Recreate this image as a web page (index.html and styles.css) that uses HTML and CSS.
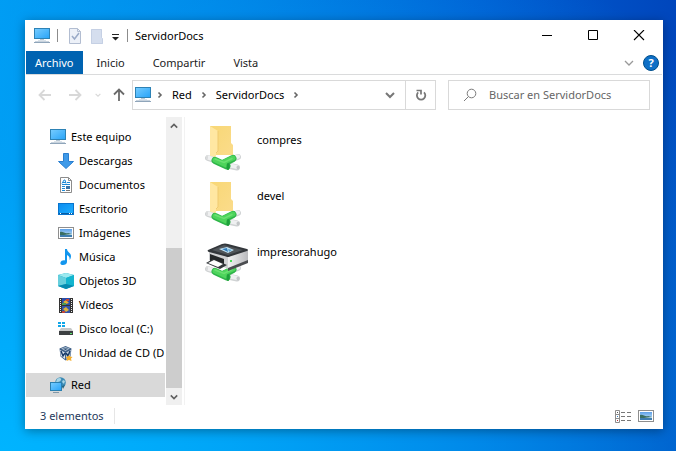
FILE: index.html
```html
<!DOCTYPE html>
<html lang="es">
<head>
<meta charset="utf-8">
<meta name="viewport" content="width=device-width, initial-scale=1">
<title>ServidorDocs</title>
<link rel="stylesheet" href="styles.css">
</head>
<body>
<svg class="defs" aria-hidden="true">
  <defs>
    <linearGradient id="screen" x1="0" y1="0" x2="1" y2="1"><stop offset="0" stop-color="#78cdff"/><stop offset="1" stop-color="#27a3f8"/></linearGradient>
    <linearGradient id="desk" x1="0" y1="0" x2="1" y2="1"><stop offset="0" stop-color="#0b8cf0"/><stop offset="1" stop-color="#1fb0ff"/></linearGradient>
    <linearGradient id="sky" x1="0" y1="0" x2="0" y2="1"><stop offset="0" stop-color="#5b9fe8"/><stop offset="1" stop-color="#d8f0fa"/></linearGradient>
    <linearGradient id="fold" x1="0" y1="0" x2="1" y2="1"><stop offset="0" stop-color="#f8d775"/><stop offset="1" stop-color="#fbdc8c"/></linearGradient>
    <linearGradient id="side" x1="0" y1="0" x2="1" y2="0"><stop offset="0" stop-color="#f2f2f3"/><stop offset="1" stop-color="#b9babd"/></linearGradient>
    <symbol id="pc" viewBox="0 0 16 16">
      <rect x=".5" y=".5" width="15" height="10" fill="url(#screen)" stroke="#2d82b5"/>
      <path d="M6 11h4v1H6z" fill="#b9c8d4"/><path d="M4 12h8v1H4z" fill="#dbe3ea"/><path d="M0 14h16v1H0z" fill="#8fa5ba"/><path d="M1 13h14v1H1z" fill="#c8d3de"/>
    </symbol>
    <symbol id="down" viewBox="0 0 16 16"><path d="M5.500.500h5v8h5L8 15.500.500 8.500h5z" fill="#3f9ae8" stroke="#2a7fd0"/></symbol>
    <symbol id="doc" viewBox="0 0 16 16">
      <path d="M2.500.500h8l3 3v12h-11z" fill="#fff" stroke="#8c8c8c"/><path d="M10.500.500v3h3" fill="none" stroke="#8c8c8c"/>
      <path d="M4 6.500L6 3h1l1 3.500M5 5.500h3M9 5.500h3M4 7.500h8M4 9.500h3M4 11.500h3M4 13.500h3" stroke="#1c8ad8" fill="none"/><path d="M8 9h4v3H8z" fill="#3974a8"/><path d="M8 13.500h4" stroke="#777"/>
    </symbol>
    <symbol id="desktop" viewBox="0 0 16 16"><rect x=".5" y="2.500" width="15" height="11" fill="url(#desk)" stroke="#0874cd"/><path d="M1 12h14v1H1z" fill="#075b9f"/><path d="M2 12h1v1H2zM11 12h1v1h-1zM13 12h1v1h-1z" fill="#fff"/></symbol>
    <symbol id="image" viewBox="0 0 16 16"><rect x=".5" y="2.500" width="15" height="11" fill="#fff" stroke="#8e8e8e"/><rect x="2" y="4" width="12" height="8" fill="url(#sky)"/><path d="M2 7c3-1 5 2 8 1l4 1v1H2z" fill="#3a6e62"/><path d="M2 10h12v2H2z" fill="#3f7db0"/><path d="M6 10l8-1v1z" fill="#c7e3ef"/></symbol>
    <symbol id="music" viewBox="0 0 16 16"><path d="M7 0h2c0 3 4 4 4 7 0 1.500-.5 3-1.500 4 .5-2.500-.5-4-2.500-5v7c0 2-2 3-4 3s-3-1-2.500-2.500C3 12 5 11 7 11.500z" fill="#1296ee"/></symbol>
    <symbol id="cube" viewBox="0 0 16 16"><path d="M8 0l8 2v11l-8 3-8-3V2z" fill="#0cabc9"/><path d="M8 0l8 2-8 3-8-3z" fill="#9ce9ef"/><path d="M0 2l8 3v6l-8 2z" fill="#67cfdd"/><path d="M8 5l8-3v11l-8-2z" fill="#13b5cf"/><path d="M8 11l8 2-8 3-8-3z" fill="#078aaf"/></symbol>
    <symbol id="video" viewBox="0 0 16 16"><path d="M1 1h14v15H1z" fill="#333"/><path d="M4 1h8v7H4z" fill="#294dab"/><path d="M4 9h8v7H4z" fill="#3454aa"/><path d="M5 5l3-2 3 3-3 1z" fill="#e8ae32"/><path d="M8 2h3v2H8z" fill="#c94636"/><path d="M4 6h4v2H4z" fill="#4c9c52"/><path d="M5 12l3-2 3 3-3 2z" fill="#deb139"/><path d="M4 14h3v2H4z" fill="#bd453b"/><path d="M2.500 2v13M13.500 2v13" stroke="#eee" stroke-dasharray="1 1"/></symbol>
    <symbol id="disk" viewBox="0 0 16 16"><path d="M0 1h3v2H0zM4 1h3v2H4zM0 4h3v2H0zM4 4h3v2H4z" fill="#10a6e8"/><path d="M3 7h10l2 3H1z" fill="#c5c7c8"/><path d="M1 10h14v4H1z" fill="#3d4042"/><path d="M12 12h2v1h-2z" fill="#5ae76c"/></symbol>
    <symbol id="cd" viewBox="0 0 16 16"><path d="M7.500 1l6 2.500-1 8-5 4-5-4-1-8z" fill="#3d5f87"/><path d="M3 3.500L7.500 2l4.500 1.500L7.500 6z" fill="#a9bccf"/><path d="M5 3.500h5L7.500 5z" fill="#24466e"/><path d="M2 5l5 2.500V14l-4-3z" fill="#dfe7f0"/><path d="M13 5L8 7.500V14l4-3z" fill="#c4d1de"/><path d="M3 6l2 5 2-3M12 6l-2 5-2-3" fill="none" stroke="#183b68" stroke-width="1.500"/><path d="M11 10l1 1.500 2.500.5-1.500 1.500.5 2.500-2.500-1-2.500 1 .5-2.500L7.500 12l2.500-.5z" fill="#f5ae2b"/></symbol>
    <symbol id="net" viewBox="0 0 16 16"><circle cx="10.500" cy="5.500" r="5.300" fill="#3c8bb5"/><path d="M7 2c2-2 5-1 4 1S8 5 6 5zM13 3l2 1-1 3-2-2z" fill="#a7d5e5"/><path d="M12 9l3-1-2 4z" fill="#27647d"/><rect x=".5" y="5.500" width="11" height="8" fill="url(#screen)" stroke="#2b80b0"/><path d="M3 15h6v1H3z" fill="#8298a8"/></symbol>
    <symbol id="cable" viewBox="0 0 38 18">
      <g fill="none" stroke-linecap="round">
        <path d="M4 4l6 2M28 5l6-2M26 12l7 1.500" stroke="#d0d3d4" stroke-width="6"/>
        <path d="M4 3.500l6 2M28 4.500l6-2M26 11.500l7 1.500" stroke="#eff0f1" stroke-width="4"/>
        <path d="M11 6.500l12 5.500M20 9l9-4.500" stroke="#2fb549" stroke-width="7"/>
        <path d="M11 6l11 5M20 8l9-4" stroke="#4ed45c" stroke-width="5"/>
        <path d="M11 5l9 3.500 8-4" stroke="#6be072" stroke-width="1.500"/>
      </g>
      <ellipse cx="24" cy="12.500" rx="1.500" ry="3.500" fill="#1ea03b"/>
      <ellipse cx="34" cy="13.500" rx="1.500" ry="2" fill="#c3c6c8"/><ellipse cx="3" cy="3.500" rx="1" ry="2" fill="#d8dadb"/>
    </symbol>
    <symbol id="folder" viewBox="0 0 48 48">
      <path d="M10 1h21v17l2 2v10H15l-5 3z" fill="url(#fold)"/><path d="M10 1l8 5v21l-2 1v5l-6-2z" fill="#ffe7a2"/><path d="M18 6v20l-2 2" fill="none" stroke="#efca70"/>
      <use href="#cable" x="4" y="29" width="38" height="18"/>
    </symbol>
    <symbol id="printer" viewBox="0 0 48 48">
      <use href="#cable" x="4" y="28" width="38" height="18"/>
      <path d="M9 13l19 6v13L9 23z" fill="#d0d1d3"/><path d="M28 19l20-6v12L28 33z" fill="url(#side)"/>
      <path d="M28 31l20-8v3l-20 8z" fill="#4b4d50"/>
      <path d="M8 13L22 7q3-1 6 0l19 5q2 1 0 2L30 19.500q-2 1-4 0L9 15q-2-1-1-2z" fill="#33373b"/><path d="M12 13l12-5 19 5-15 5z" fill="#50555a"/>
      <path d="M19 12l8-2 7 3-6 3z" fill="#c3e5f6"/><path d="M22 12l5-1 1 4z" fill="#347dba"/><path d="M28 12l4 1-3 2z" fill="#5ca3d2"/>
      <path d="M10 17l14 5v7l-14-4z" fill="#25282a"/><path d="M6 26l7-4 14 6-7 4z" fill="#34383b"/><path d="M8 26l6-3 9 4-5 3z" fill="#fff"/><path d="M30 23h2v2h-2z" fill="#4adf57"/>
    </symbol>
    <symbol id="right" viewBox="0 0 8 8"><path d="M2.500 1.500L5 4 2.500 6.500" fill="none" stroke="currentColor" stroke-width="1.600"/></symbol>
    <symbol id="chev" viewBox="0 0 10 8"><path d="M1 2l4 4 4-4" fill="none" stroke="currentColor" stroke-width="2"/></symbol>
    <symbol id="thin" viewBox="0 0 10 8"><path d="M1 2l4 4 4-4" fill="none" stroke="currentColor" stroke-width="1.300"/></symbol>
    <symbol id="arrow" viewBox="0 0 14 12"><path d="M13 6H1.500M6.500 1l-5 5 5 5" fill="none" stroke="currentColor" stroke-width="1.800"/></symbol>
  </defs>
</svg>

<main class="window">
  <header class="titlebar">
    <svg class="i16"><use href="#pc"/></svg>
    <span class="sep"></span>
    <button class="quick" aria-label="Propiedades"><svg class="quick-icon" viewBox="0 0 12 16"><path d="M.5.500h8l3 3v12H.5z" fill="#edf1f8" stroke="#b2bdd1"/><path d="M8.500.500v3h3" fill="none" stroke="#b2bdd1"/><path d="M3 8l2.500 3L10 5" fill="none" stroke="#9aaac7" stroke-width="1.500"/></svg></button>
    <button class="quick" aria-label="Nueva carpeta"><svg class="quick-icon" viewBox="0 0 12 16"><path d="M0 1h11v9l1 1v5H0z" fill="#d5deee"/><path d="M.5 1.500h10v8l1 1v5H.5z" fill="none" stroke="#c5d0e4"/></svg></button>
    <button class="quick-menu" aria-label="Personalizar"><svg class="menu-icon" viewBox="0 0 7 7"><path d="M0 0h7v1H0zM0 3h7L3.500 6.500z" fill="#222"/></svg></button>
    <span class="sep"></span>
    <h1>ServidorDocs</h1>
    <div class="controls">
      <button aria-label="Minimizar"><svg class="i12" viewBox="0 0 12 12"><path d="M1 5.500h10" stroke="#000"/></svg></button>
      <button aria-label="Maximizar"><svg class="i12" viewBox="0 0 12 12"><path d="M1.500.500h9v9h-9z" fill="none" stroke="#000"/></svg></button>
      <button aria-label="Cerrar"><svg class="i12" viewBox="0 0 12 12"><path d="M1 0l10 10M11 0L1 10" stroke="#000" stroke-width="1.100"/></svg></button>
    </div>
  </header>

  <nav class="tabs" aria-label="Cinta">
    <button class="file-tab">Archivo</button>
    <button>Inicio</button>
    <button>Compartir</button>
    <button>Vista</button>
    <div class="help-group">
      <button aria-label="Expandir la cinta"><svg class="chevron faded"><use href="#thin"/></svg></button>
      <button class="help" aria-label="Ayuda">?</button>
    </div>
  </nav>

  <div class="toolbar">
    <div class="history">
      <button class="off" aria-label="Atrás"><svg class="arrow"><use href="#arrow"/></svg></button>
      <button class="off" aria-label="Adelante"><svg class="arrow flip"><use href="#arrow"/></svg></button>
      <button class="off recent" aria-label="Recientes"><svg class="tiny"><use href="#chev"/></svg></button>
      <button class="up" aria-label="Subir"><svg class="arrow turn"><use href="#arrow"/></svg></button>
    </div>
    <div class="address">
      <svg class="i16"><use href="#pc"/></svg>
      <svg class="crumb"><use href="#right"/></svg>
      <a href="#red">Red</a>
      <svg class="crumb"><use href="#right"/></svg>
      <a href="#servidor">ServidorDocs</a>
      <svg class="crumb"><use href="#right"/></svg>
      <button class="previous" aria-label="Ubicaciones anteriores"><svg class="chevron"><use href="#chev"/></svg></button>
      <button class="refresh" aria-label="Actualizar"><svg class="i12" viewBox="0 0 12 12"><path d="M9 3.300A4.200 4.200 0 1 1 3.200 3.300" fill="none" stroke="currentColor" stroke-width="1.800"/><path d="M1.500 1.500h4.500v4" fill="none" stroke="currentColor" stroke-width="1.700"/></svg></button>
    </div>
    <label class="search">
      <svg class="glass" viewBox="0 0 14 14"><circle cx="8.500" cy="5.500" r="4.300" fill="none" stroke="#7b7b7b"/><path d="M5.500 8.500L1 13" stroke="#7b7b7b"/></svg>
      <input type="search" placeholder="Buscar en ServidorDocs" aria-label="Buscar en ServidorDocs">
    </label>
  </div>

  <div class="body">
    <nav class="tree" aria-label="Carpetas">
      <a class="root" href="#equipo"><svg class="i16"><use href="#pc"/></svg>Este equipo</a>
      <a href="#descargas"><svg class="i16"><use href="#down"/></svg>Descargas</a>
      <a href="#documentos"><svg class="i16"><use href="#doc"/></svg>Documentos</a>
      <a href="#escritorio"><svg class="i16"><use href="#desktop"/></svg>Escritorio</a>
      <a href="#imagenes"><svg class="i16"><use href="#image"/></svg>Imágenes</a>
      <a href="#musica"><svg class="i16"><use href="#music"/></svg>Música</a>
      <a href="#objetos"><svg class="i16"><use href="#cube"/></svg>Objetos 3D</a>
      <a href="#videos"><svg class="i16"><use href="#video"/></svg>Vídeos</a>
      <a href="#disco"><svg class="i16"><use href="#disk"/></svg>Disco local (C:)</a>
      <a href="#unidad"><svg class="i16"><use href="#cd"/></svg>Unidad de CD (D</a>
      <a class="root selected" href="#red"><svg class="i16"><use href="#net"/></svg>Red</a>
    </nav>
    <div class="scrollbar">
      <button aria-label="Desplazar arriba"><svg class="scroll-arrow over"><use href="#chev"/></svg></button>
      <div class="track"><div class="thumb"></div></div>
      <button aria-label="Desplazar abajo"><svg class="scroll-arrow"><use href="#chev"/></svg></button>
    </div>
    <ul class="files">
      <li><svg class="i48"><use href="#folder"/></svg><span>compres</span></li>
      <li><svg class="i48"><use href="#folder"/></svg><span>devel</span></li>
      <li><svg class="i48"><use href="#printer"/></svg><span>impresorahugo</span></li>
    </ul>
  </div>

  <footer class="status">
    <span class="count">3 elementos</span>
    <div class="views">
      <button aria-label="Detalles"><svg class="i16" viewBox="0 0 16 16"><path d="M.5 2.500h4v12h-4zM.5 6.500h4M.5 10.500h4" fill="#fff" stroke="#8d8d8d"/><path d="M2 4h1v1H2z" fill="#555"/><path d="M2 8h1v1H2z" fill="#3283c8"/><path d="M2 12h1v1H2z" fill="#b33"/><path d="M6 4.500h4M12 4.500h4M6 8.500h4M12 8.500h4M6 12.500h4M12 12.500h4" stroke="#777"/></svg></button>
      <button aria-label="Iconos grandes"><svg class="i16"><use href="#image"/></svg></button>
    </div>
  </footer>
</main>
</body>
</html>
```
FILE: styles.css
```css
* { box-sizing: border-box; }

body {
  margin: 0;
  min-height: 100vh;
  padding: 20px 13px 22px 25px;
  display: flex;
  font: 11px/16px "Noto Sans", "Open Sans", sans-serif;
  color: #000;
  background:
    radial-gradient(ellipse at 0 100%, #00b4ff 0, rgba(0, 160, 245, 0.7) 45%, rgba(0, 130, 235, 0) 95%),
    linear-gradient(90deg, #009bf3 0, #0080e4 35%, #0060d4 70%, #0046bc 100%);
}

button {
  display: flex;
  align-items: center;
  justify-content: center;
  padding: 0;
  border: 0;
  background: none;
  font: inherit;
  color: inherit;
}

a { color: inherit; text-decoration: none; }
svg { display: block; flex: none; }

.defs { position: absolute; width: 0; height: 0; }
.i12 { width: 12px; height: 12px; }
.i16 { width: 16px; height: 16px; }
.i48 { width: 48px; height: 48px; }
.chevron { width: 10px; height: 8px; }
.scroll-arrow { width: 8px; height: 8px; }
.crumb { width: 8px; height: 8px; color: #666; }
.tiny { width: 6px; height: 6px; }
.arrow { width: 14px; height: 12px; }
.flip, .over { transform: rotate(180deg); }
.turn { transform: rotate(90deg); }
.faded { color: #999; }

.window {
  flex: 1;
  min-width: 0;
  display: flex;
  flex-direction: column;
  padding: 0 1px;
  background: #fff;
  box-shadow: 0 2px 10px rgba(0, 0, 0, 0.35);
}

.titlebar {
  display: flex;
  align-items: center;
  height: 31px;
  padding-left: 8px;
}
.titlebar h1 { margin: 0 0 0 7px; font-size: 11px; font-weight: 400; }
.sep { width: 1px; height: 13px; margin-left: 7px; background: #8c8c8c; }
.quick { margin-left: 11px; }
.quick + .quick { margin-left: 10px; }
.quick-icon { width: 12px; height: 16px; }
.quick-menu { margin: 3px 1px 0 9px; }
.menu-icon { width: 7px; height: 7px; }
.controls { display: flex; margin-left: auto; height: 100%; }
.controls button { width: 46px; }

.tabs {
  display: flex;
  height: 24px;
  border-bottom: 1px solid #dadbdc;
  color: #222;
}
.tabs > button { padding: 0 14px; }
.tabs > .file-tab { padding: 0 9px; background: #0063b1; color: #fff; }
.help-group { display: flex; align-items: center; gap: 9px; margin-left: auto; padding-right: 3px; }
.help {
  width: 16px;
  height: 16px;
  border: 1px solid #004f8c;
  border-radius: 50%;
  background: #0f6fc6;
  color: #fff;
  font-weight: 700;
}

.toolbar {
  display: flex;
  gap: 12px;
  padding: 5px 12px 7px;
}
.history { display: flex; align-items: center; gap: 16px; width: 82px; color: #6b6b6b; }
.history .off { color: #d8d8d8; }
.history .recent { margin-left: -3px; }
.history .up { margin-left: -5px; }
.address, .search {
  display: flex;
  align-items: center;
  height: 30px;
  min-width: 0;
  border: 1px solid #d9d9d9;
}
.address { flex: 3; gap: 8px; padding-left: 2px; }
.address .i16 { margin-right: -3px; }
.previous { width: 30px; height: 28px; margin-left: auto; color: #777; }
.refresh { width: 30px; height: 28px; margin-left: -8px; border-left: 1px solid #d9d9d9; color: #777; }
.search { flex: 2; }
.glass { width: 14px; height: 14px; margin: 0 12px 0 14px; }
.search input {
  flex: 1;
  min-width: 0;
  padding: 0;
  border: 0;
  outline: 0;
  background: none;
  font: inherit;
}
.search input::placeholder { color: #666; opacity: 1; }

.body { flex: 1; display: flex; min-height: 0; }
.tree { width: 139px; padding: 8px 0; overflow: hidden; }
.tree a {
  display: flex;
  align-items: center;
  gap: 5px;
  height: 24px;
  padding-left: 32px;
  white-space: nowrap;
}
.tree .root { padding-left: 24px; }
.tree .selected { margin-top: 8px; background: #d9d9d9; }
.scrollbar {
  display: flex;
  flex-direction: column;
  width: 16px;
  margin-left: 1px;
  background: #f0f0f0;
  color: #606060;
}
.scrollbar button { height: 17px; }
.track { flex: 1; display: flex; flex-direction: column; justify-content: flex-end; }
.thumb { height: 55%; background: #cdcdcd; }
.files {
  flex: 1;
  margin: 0 0 0 2px;
  padding: 8px 15px;
  border-left: 1px solid #f2f2f2;
  list-style: none;
}
.files li { display: flex; gap: 9px; height: 56px; }
.files span { padding-top: 7px; }

.status {
  display: flex;
  align-items: center;
  justify-content: space-between;
  height: 24px;
  padding: 0 8px 2px 14px;
  color: #1e395b;
}
.count { padding-right: 10px; border-right: 1px solid #e6e6e6; }
.views { display: flex; gap: 7px; }
```
